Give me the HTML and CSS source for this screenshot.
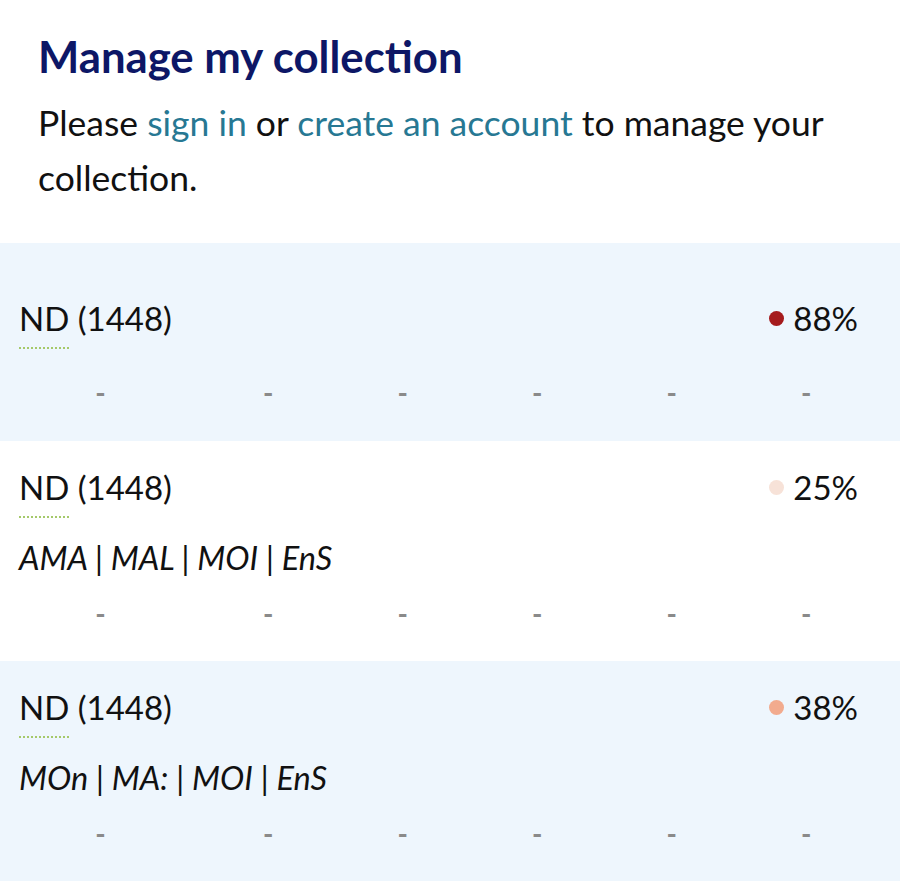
FILE: index.html
```html
<!DOCTYPE html>
<html lang="en">
<head>
<meta charset="utf-8">
<title>Manage my collection</title>
<link rel="stylesheet" href="styles.css">
</head>
<body>
<section class="intro">
  <h2 class="title">Manage my collection</h2>
  <p class="lead">Please <a href="#">sign in</a> or <a href="#">create an account</a> to manage your collection.</p>
</section>
<ul class="list">
  <li class="row row-first shade">
    <div class="head">
      <span class="name"><abbr class="abbr">ND</abbr> (1448)</span>
      <span class="pct"><span class="dot dot-high"></span>88%</span>
    </div>
    <div class="cells"><span>-</span><span>-</span><span>-</span><span>-</span><span>-</span><span>-</span></div>
  </li>
  <li class="row">
    <div class="head">
      <span class="name"><abbr class="abbr">ND</abbr> (1448)</span>
      <span class="pct"><span class="dot dot-low"></span>25%</span>
    </div>
    <div class="tags">AMA | MAL | MOI | EnS</div>
    <div class="cells"><span>-</span><span>-</span><span>-</span><span>-</span><span>-</span><span>-</span></div>
  </li>
  <li class="row shade">
    <div class="head">
      <span class="name"><abbr class="abbr">ND</abbr> (1448)</span>
      <span class="pct"><span class="dot dot-mid"></span>38%</span>
    </div>
    <div class="tags">MOn | MA: | MOI | EnS</div>
    <div class="cells"><span>-</span><span>-</span><span>-</span><span>-</span><span>-</span><span>-</span></div>
  </li>
</ul>
</body>
</html>
```
FILE: styles.css
```css
html, body {
  margin: 0;
  padding: 0;
  background: #ffffff;
}
body {
  font-family: Lato, "Noto Sans", sans-serif;
  color: #111111;
  width: 900px;
  height: 884px;
  overflow: hidden;
}
.intro {
  padding: 30px 38px 0 38px;
  height: 243px;
  box-sizing: border-box;
}
.title {
  margin: 0;
  font-size: 43.7px;
  line-height: 52px;
  font-weight: 700;
  color: #0d1766;
}
.lead {
  margin: 13px 0 0 0;
  font-size: 35.5px;
  line-height: 55px;
  color: #111111;
}
.lead a {
  color: #277893;
  text-decoration: none;
}
.list {
  list-style: none;
  margin: 0;
  padding: 0;
}
.row {
  height: 220px;
  box-sizing: border-box;
  padding: 22px 42px 0 19px;
}
.row-first {
  height: 198px;
  padding-top: 51px;
}
.shade {
  background: #eef6fd;
}
.head {
  display: flex;
  justify-content: space-between;
  align-items: baseline;
  font-size: 33px;
  line-height: 48px;
}
.abbr {
  text-decoration: none;
  border-bottom: 2px dotted #a5c96a;
  padding-bottom: 9px;
}
.pct {
  white-space: nowrap;
}
.dot {
  display: inline-block;
  width: 15px;
  height: 15px;
  border-radius: 50%;
  margin-right: 9px;
  vertical-align: 5px;
}
.dot-high { background: #a51b1d; }
.dot-low { background: #f7e2d8; }
.dot-mid { background: #f2ab8e; }
.tags {
  font-style: italic;
  font-size: 32.5px;
  line-height: 48px;
  margin-top: 23px;
}
.cells {
  display: grid;
  grid-template-columns: 182px repeat(5, 134.5px);
  margin-top: 16px;
  font-size: 28px;
  font-weight: 700;
  line-height: 30px;
  color: #8a8a8a;
}
.cells span {
  text-align: center;
}
.cells span:first-child {
  padding-right: 19px;
}
.row-first .cells {
  margin-top: 35px;
}
```
